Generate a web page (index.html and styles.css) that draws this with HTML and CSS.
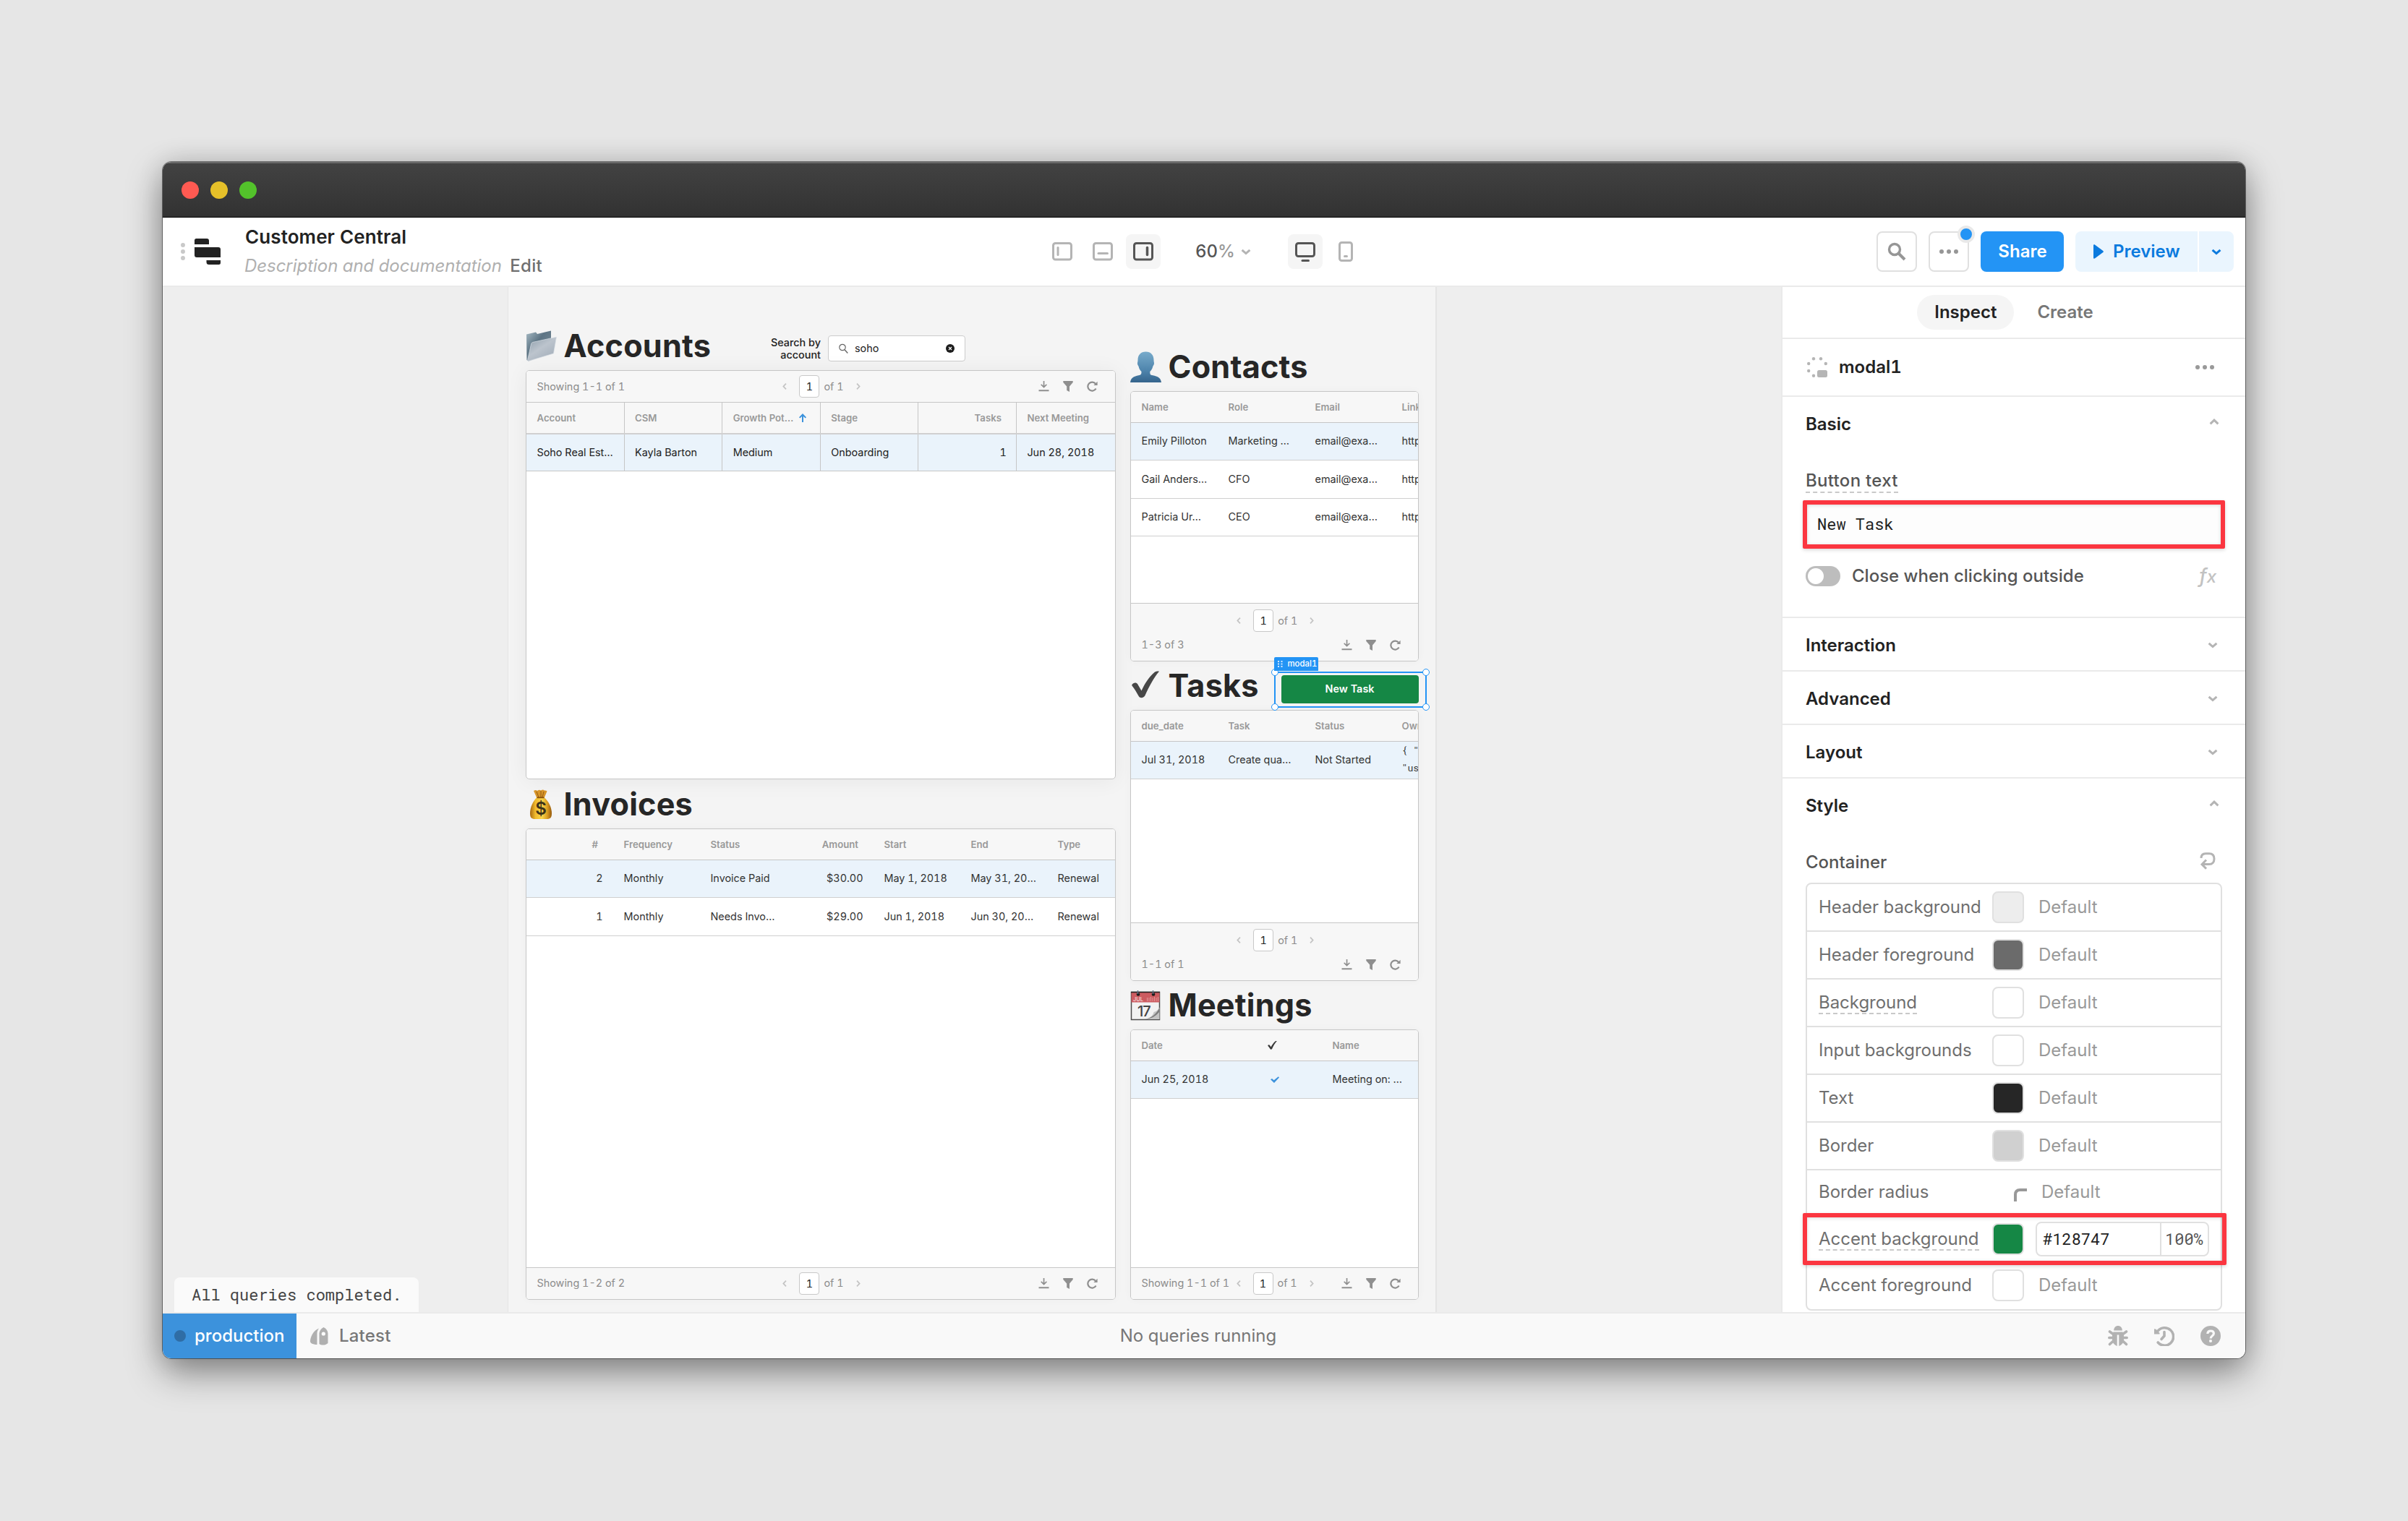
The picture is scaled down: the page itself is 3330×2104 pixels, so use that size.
FILE: index.html
```
<!DOCTYPE html>
<html lang="en">
<head>
<meta charset="utf-8">
<title>Customer Central</title>
<link rel="stylesheet" href="styles.css">
</head>
<body>
<svg class="defs" aria-hidden="true">
  <symbol id="chev-down" viewBox="0 0 14 9"><path d="M1.6 1.8 7 6.6l5.4-4.8" fill="none" stroke="currentColor" stroke-width="3"/></symbol>
  <symbol id="chev-up" viewBox="0 0 14 9"><path d="M1.6 7.4 7 2.2l5.4 5.2" fill="none" stroke="currentColor" stroke-width="3"/></symbol>
  <symbol id="prev" viewBox="0 0 6 9"><path d="M5 .7 1.4 4.5 5 8.3" fill="none" stroke="currentColor" stroke-width="1.8"/></symbol>
  <symbol id="next" viewBox="0 0 6 9"><path d="M1 .7 4.6 4.5 1 8.3" fill="none" stroke="currentColor" stroke-width="1.8"/></symbol>
  <symbol id="download" viewBox="0 0 15 15"><path d="M.5 12.2h14v2.1H.5zM6.7 0h1.7v6.600l2.600-2.300.9 1.300-4.350 4.200L3.200 5.600l.9-1.300 2.600 2.300z" fill="currentColor"/></symbol>
  <symbol id="filter" viewBox="0 0 14 15"><path d="M.3 0h13.400v1.900L9 7.400V15l-3.800-2V7.400L.3 1.900z" fill="currentColor"/></symbol>
  <symbol id="refresh" viewBox="0 0 15 15"><path d="M12.600 10.500A6 6 0 1 1 12 3.800" fill="none" stroke="currentColor" stroke-width="2.200"/><path d="M14.600.800V6H9.400z" fill="currentColor"/></symbol>
  <symbol id="dots" viewBox="0 0 26 6"><circle cx="3" cy="3" r="3"/><circle cx="13" cy="3" r="3"/><circle cx="23" cy="3" r="3"/></symbol>
</svg>

<div class="window">
  <div class="titlebar"><i class="light red"></i><i class="light yellow"></i><i class="light green"></i></div>

  <header class="topbar">
    <div class="brand">
      <svg class="grip" viewBox="0 0 6 24"><circle cx="3" cy="3" r="3"/><circle cx="3" cy="12" r="3"/><circle cx="3" cy="21" r="3"/></svg>
      <svg class="logo" viewBox="0 0 36 36"><path d="M2.500 0H17a3 3 0 0 1 3 3v5H0V2.500A2.500 2.500 0 0 1 2.500 0zM0 12h33a3 3 0 0 1 3 3v11H3a3 3 0 0 1-3-3zM16.500 30H36v3.500a2.500 2.500 0 0 1-2.500 2.500H20a3.500 3.500 0 0 1-3.500-3.500z"/></svg>
      <div class="names">
        <div class="app-name">Customer Central</div>
        <div class="desc"><em>Description and documentation</em> <span>Edit</span></div>
      </div>
    </div>
    <div class="view-tools">
      <span class="tool"><svg width="28" height="26" viewBox="0 0 28 26"><rect x="1.500" y="1.500" width="25" height="22.500" rx="3"/><path d="M8 7.500v10"/></svg></span>
      <span class="tool"><svg width="28" height="26" viewBox="0 0 28 26"><rect x="1.500" y="1.500" width="25" height="22.500" rx="3"/><path d="M8 15.500h12.500"/></svg></span>
      <span class="tool on"><svg width="28" height="26" viewBox="0 0 28 26"><rect x="1.500" y="1.500" width="25" height="22.500" rx="3"/><path d="M19.500 7.500v10" stroke-width="3.500"/></svg></span>
      <span class="zoom">60<b>%</b><svg class="chev" width="14" height="9"><use href="#chev-down"/></svg></span>
      <span class="tool on"><svg width="28" height="28" viewBox="0 0 28 28"><rect x="1.500" y="2.500" width="25" height="18" rx="3"/><path d="M10 26.500h8.500"/></svg></span>
      <span class="tool"><svg width="20" height="28" viewBox="0 0 20 28"><rect x="1.500" y="1.500" width="17" height="25" rx="3"/><path d="M8.500 20.500h3"/></svg></span>
    </div>
    <div class="actions">
      <span class="icon-btn"><svg width="26" height="26" viewBox="0 0 26 26"><circle cx="10" cy="10" r="7.500" fill="none" stroke="currentColor" stroke-width="3.400"/><path d="m15.500 15.500 8.500 8.500" stroke="currentColor" stroke-width="4"/></svg></span>
      <span class="icon-btn"><svg width="26" height="6"><use href="#dots"/></svg><i class="badge"></i></span>
      <span class="share">Share</span>
      <span class="preview"><span class="preview-main"><svg width="14" height="20" viewBox="0 0 14 20"><path d="M0 1.500C0 .2 1.200-.2 2.200.7L13 8.700a1.600 1.600 0 0 1 0 2.600L2.200 19.300C1.200 20.200 0 19.800 0 18.500z"/></svg>Preview</span><span class="preview-more"><svg width="14" height="9"><use href="#chev-down"/></svg></span></span>
    </div>
  </header>

  <main class="workspace">
    <div class="stage">
      <div class="canvas">
        <section class="col">
          <div class="heading first-left">
            <svg class="emoji" viewBox="0 0 43 43"><defs><linearGradient id="fb" x1="0" y1="0" x2="1" y2="1"><stop offset="0" stop-color="#a9bcc6"/><stop offset=".4" stop-color="#5d7484"/><stop offset="1" stop-color="#7e919d"/></linearGradient><linearGradient id="ff" x1="0" y1="0" x2=".8" y2="1"><stop offset="0" stop-color="#8b9ba9"/><stop offset=".5" stop-color="#bcc4cd"/><stop offset="1" stop-color="#a2adb9"/></linearGradient></defs><path d="M1 5.500 14 2.500l2 2.500 19-4.500v31L4 42.500 1.500 41z" fill="url(#fb)"/><path d="M9.500 16.500 42.500 9.200 38.500 32 3.500 42.500q-1-.5-.8-2L7.500 19q.5-2 2-2.500z" fill="url(#ff)" stroke="#dde3e8" stroke-width=".7"/></svg>
            <h2>Accounts</h2>
            <div class="search">
              <label>Search by<br>account</label>
              <div class="search-box"><svg width="13" height="15" viewBox="0 0 13 15"><circle cx="5" cy="5.500" r="4.200" fill="none" stroke="#666" stroke-width="1.200"/><path d="m8 8.800 4.300 4.700" stroke="#666" stroke-width="1.400"/></svg><span>soho</span><svg width="12" height="12" viewBox="0 0 12 12"><circle cx="6" cy="6" r="6" fill="#1d1d1d"/><path d="m4 4 4 4M8 4 4 8" stroke="#fff" stroke-width="1.200"/></svg></div>
            </div>
          </div>
          <div class="table accounts">
            <div class="bar top"><span>Showing 1-1 of 1</span><span class="pager"><svg width="6" height="9"><use href="#prev"/></svg><b>1</b>of 1<svg width="6" height="9"><use href="#next"/></svg></span><span class="tools"><svg width="15" height="15"><use href="#download"/></svg><svg width="14" height="15"><use href="#filter"/></svg><svg width="15" height="15"><use href="#refresh"/></svg></span></div>
            <div class="row head"><span>Account</span><span>CSM</span><span>Growth Pot… <svg class="sort" width="10" height="12" viewBox="0 0 10 12"><path d="M5 0 10 5.300 8.700 6.600 6 4v8H4V4L1.300 6.600 0 5.300z" fill="#3c92dc"/></svg></span><span>Stage</span><span class="num">Tasks</span><span>Next Meeting</span></div>
            <div class="row sel"><span>Soho Real Est…</span><span>Kayla Barton</span><span>Medium</span><span>Onboarding</span><span class="num">1</span><span>Jun 28, 2018</span></div>
          </div>
          <div class="heading">
            <svg class="emoji" viewBox="0 0 43 43"><defs><linearGradient id="bag" x1="0" x2="1"><stop offset="0" stop-color="#a9690f"/><stop offset=".25" stop-color="#f0bb2d"/><stop offset=".55" stop-color="#fbd64c"/><stop offset=".8" stop-color="#d99a20"/><stop offset="1" stop-color="#95590c"/></linearGradient></defs><path d="M11 3q3-2 5 0 2.500-2.200 5-.6Q24 .500 26 2.600q2-.6 3.500.8L25.500 13h-10z" fill="#d8962a"/><path d="m15 4 3 8m3-9v9m4-8-2 8" stroke="#8d5510" stroke-width=".9"/><path d="M15.500 12h10c6 5 10.500 14 10.500 22 0 6-2 8-7 8H13c-5 0-7-2-7-8 0-8 4-17 9.500-22z" fill="url(#bag)"/><path d="M15.500 12.300h10" stroke="#8a520e" stroke-width="1.800"/><text x="21" y="36" text-anchor="middle" class="dollar">$</text></svg>
            <h2>Invoices</h2>
          </div>
          <div class="table invoices">
            <div class="row head"><span class="num">#</span><span>Frequency</span><span>Status</span><span class="num">Amount</span><span>Start</span><span>End</span><span>Type</span></div>
            <div class="row sel"><span class="num">2</span><span>Monthly</span><span>Invoice Paid</span><span class="num">$30.00</span><span>May 1, 2018</span><span>May 31, 20…</span><span>Renewal</span></div>
            <div class="row"><span class="num">1</span><span>Monthly</span><span>Needs Invo…</span><span class="num">$29.00</span><span>Jun 1, 2018</span><span>Jun 30, 20…</span><span>Renewal</span></div>
            <div class="bar bottom"><span>Showing 1-2 of 2</span><span class="pager"><svg width="6" height="9"><use href="#prev"/></svg><b>1</b>of 1<svg width="6" height="9"><use href="#next"/></svg></span><span class="tools"><svg width="15" height="15"><use href="#download"/></svg><svg width="14" height="15"><use href="#filter"/></svg><svg width="15" height="15"><use href="#refresh"/></svg></span></div>
          </div>
        </section>

        <section class="col right">
          <div class="heading first-right">
            <svg class="emoji" viewBox="0 0 43 43"><defs><linearGradient id="pp" x1="0" y1="0" x2="0" y2="1"><stop offset="0" stop-color="#78abcb"/><stop offset=".6" stop-color="#4f85ad"/><stop offset="1" stop-color="#35648c"/></linearGradient></defs><path d="M21.500.5c7 0 11 4.500 11 11.500 0 3 .8 3.500.4 5.500-.4 2-1.400 2.200-1.800 4-.6 2.800-2 4.700-3.800 6.500 0 3 .2 4 1.700 4.800 6 1.700 13 1.700 14 10.200H0c1-8.500 8-8.500 13.500-10.200 1.700-.8 2-2 2-4.800-1.900-1.800-3.200-3.700-3.700-6.500-.4-1.800-1.500-2-1.800-4-.3-2 .5-2.500.5-5.500 0-7 4-11.500 11-11.500z" fill="url(#pp)"/></svg>
            <h2>Contacts</h2>
          </div>
          <div class="table contacts">
            <div class="row head"><span>Name</span><span>Role</span><span>Email</span><span>LinkedIn</span></div>
            <div class="row sel"><span>Emily Pilloton</span><span>Marketing …</span><span>email@exa…</span><span>https://</span></div>
            <div class="row"><span>Gail Anders…</span><span>CFO</span><span>email@exa…</span><span>https://</span></div>
            <div class="row"><span>Patricia Ur…</span><span>CEO</span><span>email@exa…</span><span>https://</span></div>
            <div class="bar double"><span class="pager"><svg width="6" height="9"><use href="#prev"/></svg><b>1</b>of 1<svg width="6" height="9"><use href="#next"/></svg></span><span class="count">1-3 of 3</span><span class="tools"><svg width="15" height="15"><use href="#download"/></svg><svg width="14" height="15"><use href="#filter"/></svg><svg width="15" height="15"><use href="#refresh"/></svg></span></div>
          </div>
          <div class="heading">
            <svg class="emoji" viewBox="0 0 43 43"><path d="M2.500 20c1.500-3 6-3.500 7.500-1l5.500 9.500C20 19 26 9 33.500 3c1.500-1.200 4-1.800 6.500-1.300C32 11 26 23 20.500 35c-1.300 3.200-6.500 4.500-8.500 1.500-3-5-5.500-10-9.200-14.500-.6-.8-.6-1.400-.3-2z" fill="#474747"/></svg>
            <h2>Tasks</h2>
            <div class="modal-widget">
              <span class="green-btn">New Task</span>
              <div class="selection"><i class="h tl"></i><i class="h tr"></i><i class="h bl"></i><i class="h br"></i><span class="tag"><svg width="7" height="9" viewBox="0 0 7 9"><path d="M0 0h2v2H0zM4.500 0h2v2h-2zM0 3.500h2v2H0zM4.500 3.500h2v2h-2zM0 7h2v2H0zM4.500 7h2v2h-2z" fill="#cfe6fd"/></svg>modal1</span></div>
            </div>
          </div>
          <div class="table contacts tasks">
            <div class="row head"><span>due_date</span><span>Task</span><span>Status</span><span>Owner</span></div>
            <div class="row sel"><span>Jul 31, 2018</span><span>Create qua…</span><span>Not Started</span><span class="json">{ "<br>"user</span></div>
            <div class="bar double"><span class="pager"><svg width="6" height="9"><use href="#prev"/></svg><b>1</b>of 1<svg width="6" height="9"><use href="#next"/></svg></span><span class="count">1-1 of 1</span><span class="tools"><svg width="15" height="15"><use href="#download"/></svg><svg width="14" height="15"><use href="#filter"/></svg><svg width="15" height="15"><use href="#refresh"/></svg></span></div>
          </div>
          <div class="heading">
            <svg class="emoji" viewBox="0 0 43 43"><rect x="1.500" y="3.500" width="39" height="38" fill="#f2f2f2" stroke="#4b4b4b" stroke-width="1.500"/><path d="M1.500 3.500h39v14h-39z" fill="#cc5b60"/><path d="M1 3.500h40" stroke="#222" stroke-width="1.500"/><circle cx="11" cy="6.500" r="2.300" fill="#1c1c1c"/><circle cx="32" cy="6.500" r="2.300" fill="#1c1c1c"/><path d="M10.500 1v5M31.500 1v5" stroke="#5c7488" stroke-width="1.500"/><text x="4" y="16" class="cal-month">JUL</text><path d="M23.500 11v5m2.500-5v5m2.500-6v6m2.500-5v5m2.500-6v6m2.500-5v5m2.500-6v6" stroke="#e3979a" stroke-width="1"/><path d="M21 41c7-2 11-6 11.500-10 3-.5 6-3 8-6.500V41z" fill="#c4c4c4"/><path d="M21 41c8-2 15-7 19.500-16l-.5 6c-5 6-11 9-19 10z" fill="#7d7d7d"/><text x="10" y="37" class="cal-day">17</text></svg>
            <h2>Meetings</h2>
          </div>
          <div class="table meetings">
            <div class="row head"><span>Date</span><span><svg width="13" height="12" viewBox="0 0 13 12"><path d="M.3 6c.6-1 2-1.100 2.500-.3L4.600 8.300C6.200 5.200 8.200 2.200 10.500.4c.6-.4 1.500-.5 2.300-.3C10 3.200 8 7 6.200 10.700c-.5 1-2.100 1.400-2.700.4C2.600 9.500 1.500 8 .4 6.700z" fill="#3a3a3a"/></svg></span><span>Name</span></div>
            <div class="row sel"><span>Jun 25, 2018</span><span class="mid"><svg width="12" height="9" viewBox="0 0 12 9"><path d="M0 4.300 2 3l2.700 2.200L10.800.2 12 1.500 5 9z" fill="#3c92dc"/></svg></span><span>Meeting on: …</span></div>
            <div class="bar bottom"><span>Showing 1-1 of 1</span><span class="pager"><svg width="6" height="9"><use href="#prev"/></svg><b>1</b>of 1<svg width="6" height="9"><use href="#next"/></svg></span><span class="tools"><svg width="15" height="15"><use href="#download"/></svg><svg width="14" height="15"><use href="#filter"/></svg><svg width="15" height="15"><use href="#refresh"/></svg></span></div>
          </div>
        </section>
      </div>
      <div class="toast">All queries completed.</div>
    </div>

    <aside class="inspector">
      <nav class="tabs"><span class="tab active">Inspect</span><span class="tab">Create</span></nav>
      <div class="component">
        <svg width="28" height="28" viewBox="0 0 28 28"><g fill="#b5b5b5"><circle cx="9" cy="2.200" r="2.200"/><circle cx="19" cy="2.200" r="2.200"/><circle cx="2.200" cy="9" r="2.200"/><circle cx="25.800" cy="9" r="2.200"/><circle cx="2.200" cy="19" r="2.200"/><circle cx="9" cy="25.800" r="2.200"/><rect x="14" y="18" width="14" height="10" rx="2.500"/></g></svg>
        <span>modal1</span><svg class="more" width="26" height="6"><use href="#dots"/></svg>
      </div>
      <section class="basic">
        <div class="section-head open"><span>Basic</span><svg width="14" height="9"><use href="#chev-up"/></svg></div>
        <div class="field-label"><span class="dashed">Button text</span></div>
        <div class="input highlight">New Task</div>
        <div class="switch-row"><i class="switch"></i><span>Close when clicking outside</span><span class="fx">f<small>x</small></span></div>
      </section>
      <div class="section-head"><span>Interaction</span><svg width="14" height="9"><use href="#chev-down"/></svg></div>
      <div class="section-head"><span>Advanced</span><svg width="14" height="9"><use href="#chev-down"/></svg></div>
      <div class="section-head"><span>Layout</span><svg width="14" height="9"><use href="#chev-down"/></svg></div>
      <div class="section-head open"><span>Style</span><svg width="14" height="9"><use href="#chev-up"/></svg></div>
      <div class="style-title"><span>Container</span><svg width="22" height="24" viewBox="0 0 22 24"><path d="M2 8c0-4 2.500-6.300 6.500-6.300H13c4.500 0 7 2.800 7 7.300s-2.500 7.500-7 7.500H4" fill="none" stroke="currentColor" stroke-width="3"/><path d="M9 10.500 3 16.700l6 6" fill="none" stroke="currentColor" stroke-width="3"/></svg></div>
      <div class="style-list">
        <div class="style-row"><span class="name">Header background</span><i class="swatch c-head"></i><span>Default</span></div>
        <div class="style-row"><span class="name">Header foreground</span><i class="swatch c-fore"></i><span>Default</span></div>
        <div class="style-row"><span class="name"><u class="dashed">Background</u></span><i class="swatch"></i><span>Default</span></div>
        <div class="style-row"><span class="name">Input backgrounds</span><i class="swatch"></i><span>Default</span></div>
        <div class="style-row"><span class="name">Text</span><i class="swatch c-text"></i><span>Default</span></div>
        <div class="style-row"><span class="name">Border</span><i class="swatch c-border"></i><span>Default</span></div>
        <div class="style-row radius"><span class="name">Border radius</span><svg class="corner" width="18" height="18" viewBox="0 0 18 18"><path d="M2 18V8.500C2 4.500 4 2 8.500 2H18" fill="none" stroke="#999" stroke-width="4"/></svg><span>Default</span></div>
        <div class="style-row accent"><span class="name"><u class="dashed">Accent background</u></span><i class="swatch c-accent"></i><span class="hex"><span>#128747</span><span>100%</span></span></div>
        <div class="style-row"><span class="name">Accent foreground</span><i class="swatch"></i><span>Default</span></div>
      </div>
    </aside>
  </main>

  <footer class="statusbar">
    <div class="status-left">
      <span class="env"><i></i>production</span>
      <svg width="25" height="25" viewBox="0 0 25 25"><path d="M12.500 8c.6-3.200 2.800-6.500 6-8 3.500 1.600 5.800 4.800 6 8.500V22c-3 3-9 3.500-12 1z" fill="#b0b0b0"/><path d="M12 1.500C10 4 9.500 6.500 9.500 9v15C5 24 0 22.500 0 19.500 0 14 4 4.500 12 1.500z" fill="#b0b0b0"/><circle cx="18.300" cy="9" r="2.600" fill="#fff"/></svg>
      <span>Latest</span>
    </div>
    <span class="status-mid">No queries running</span>
    <div class="status-right">
      <svg width="28" height="28" viewBox="0 0 28 28"><path d="M8.200 6.500C8.200 2.500 10.500 0 14 0S19.800 2.500 19.800 6.500z" fill="#b2b2b2"/><path d="M7.500 8.500h13l1.500 4v9c-2 4-5 6.500-8 6.500S8 25.500 6 21.500v-9z" fill="#b2b2b2"/><path d="M8 12 2.500 8M8 16.500H1.800M8 20.500l-5.500 5M20 12l5.500-4M20 16.500h6.200M20 20.500l5.500 5" stroke="#b2b2b2" stroke-width="3.600" stroke-linecap="round"/><path d="M14 12.500V28" stroke="#f9f9f9" stroke-width="2.600"/></svg>
      <svg width="28" height="28" viewBox="0 0 28 28"><path d="M5 7.200A12.200 12.200 0 1 1 5.200 23" fill="none" stroke="#b2b2b2" stroke-width="3.600" stroke-linecap="round"/><path d="M0 4.200l2.500.5L7.500 10v1.500H0z" fill="#b2b2b2"/><path d="M14 8.500V14l-4 4.500" fill="none" stroke="#b2b2b2" stroke-width="3.600" stroke-linecap="round"/></svg>
      <svg width="28" height="28" viewBox="0 0 28 28"><circle cx="14" cy="14" r="14" fill="#b2b2b2"/><path d="M9.800 11c.2-2.600 1.900-4 4.300-4 2.500 0 4.300 1.400 4.300 3.600 0 3.200-4.300 3.400-4.300 6.900" fill="none" stroke="#f9f9f9" stroke-width="3.200"/><circle cx="14" cy="21" r="2.100" fill="#f9f9f9"/></svg>
    </div>
  </footer>
</div>
</body>
</html>
```
FILE: styles.css
```
* { box-sizing: border-box; }
body {
  margin: 0;
  width: 3330px;
  height: 2104px;
  padding: 224px 225px 0;
  background: #e6e6e6;
  overflow: hidden;
  font: 400 24px/30px Inter, "Liberation Sans", sans-serif;
  font-feature-settings: "tnum";
  color: #222;
}
svg { display: block; flex: none; }
i { font-style: normal; }
.defs { position: absolute; width: 0; height: 0; }

.window {
  display: grid;
  grid-template-rows: 77px 96px 1fr 64px;
  width: 2880px;
  height: 1655px;
  border-radius: 12px;
  overflow: hidden;
  background: #fff;
  box-shadow: 0 0 0 1px rgba(0, 0, 0, .45), 0 20px 50px rgba(0, 0, 0, .42), 0 0 36px rgba(0, 0, 0, .12);
}
.titlebar {
  display: flex;
  align-items: center;
  gap: 16px;
  padding: 0 0 0 26px;
  background: linear-gradient(#424242, #323232);
  border-top: 2px solid #6a6a6a;
  border-bottom: 1px solid #000;
}
.light { width: 24px; height: 24px; border-radius: 50%; }
.red { background: #ff5a52; }
.yellow { background: #e6c029; }
.green { background: #53c22b; }

/* top bar */
.topbar {
  display: grid;
  grid-template-columns: 1fr auto 1fr;
  align-items: center;
  border-bottom: 2px solid #eaeaea;
}
.brand { display: flex; align-items: center; padding-left: 25px; }
.grip { width: 6px; height: 24px; fill: #c9c9c9; }
.logo { width: 36px; height: 36px; margin-left: 13px; fill: #222; }
.names { margin-left: 33px; }
.app-name { padding-left: 1px; font-size: 26px; font-weight: 600; line-height: 40px; letter-spacing: .1px; }
.desc { line-height: 40px; color: #b0b0b0; white-space: pre; }
.desc em { letter-spacing: -.04px; }
.desc span { margin-left: 5px; font-weight: 500; letter-spacing: .3px; color: #6f6f6f; }
.view-tools { display: flex; align-items: center; gap: 8px; }
.tool { display: flex; align-items: center; justify-content: center; width: 48px; height: 48px; border-radius: 8px; }
.tool svg { fill: none; stroke: #b4b4b4; stroke-width: 3; stroke-linecap: round; }
.tool.on { background: #f5f5f5; }
.tool.on svg { stroke: #555; }
.zoom { display: flex; align-items: center; width: 160px; padding-left: 40px; font-weight: 500; color: #555; }
.zoom b { font-weight: 500; color: #999; }
.chev { margin-left: 8px; color: #b4b4b4; }
.actions { display: flex; justify-content: flex-end; gap: 16px; padding-right: 16px; font-weight: 600; }
.icon-btn { position: relative; display: flex; align-items: center; justify-content: center; width: 56px; height: 56px; border: 2px solid #e0e0e0; border-radius: 8px; color: #969696; fill: #969696; }
.badge { position: absolute; top: -10px; right: -10px; width: 24px; height: 24px; border: 4px solid #e9e9e9; border-radius: 50%; background: #2394f5; }
.share { display: flex; align-items: center; justify-content: center; width: 115px; height: 56px; padding-left: 1px; border-radius: 8px; background: #2394f5; color: #fff; }
.preview { display: flex; gap: 2px; color: #0b7ade; fill: #0b7ade; }
.preview-main { display: flex; align-items: center; gap: 13px; width: 169px; height: 56px; padding-left: 25px; background: #eaf5fe; border-radius: 8px 0 0 8px; }
.preview-more { display: flex; align-items: center; justify-content: center; width: 48px; background: #eaf5fe; border-radius: 0 8px 8px 0; }

/* canvas */
.workspace { display: grid; grid-template-columns: 1fr 642px; min-height: 0; }
.stage { position: relative; padding-left: 477px; background: #eee; }
.canvas {
  display: grid;
  grid-template-columns: 815.5px 399px;
  column-gap: 20.5px;
  width: 1285px;
  height: 1418px;
  padding: 0 0 17px 24px;
  background: #f4f4f4;
  border: solid #e4e4e4;
  border-width: 0 2px 0 1px;
}
.toast { position: absolute; left: 16px; bottom: 0; width: 338px; height: 48px; padding-left: 24px; background: #fafafa; border-radius: 8px 8px 0 0; font: 22px/48px "Roboto Mono", monospace; color: #444; }
.col { display: flex; flex-direction: column; min-width: 0; }
.heading { display: flex; align-items: flex-end; flex: none; height: 68px; padding-bottom: 12px; }
.right .heading { height: 67px; }
.heading.first-left { height: 115px; }
.heading.first-right { height: 144px; }
.emoji { width: 43px; height: 43px; margin-right: 9.500px; }
h2 { margin: 0; font-size: 43.2px; font-weight: 700; line-height: 44px; letter-spacing: .2px; color: #262626; }
.dollar { font: 600 24px Inter, sans-serif; fill: #3c3218; }
.cal-month { font: 500 7.500px Inter, sans-serif; fill: #f5dada; }
.cal-day { font: 500 20px Inter, sans-serif; fill: #444; letter-spacing: -1px; }
.search { display: flex; align-items: center; gap: 10px; margin: 0 207.500px 0 auto; font-size: 14.4px; }
.search label { font-weight: 500; line-height: 17px; text-align: right; }
.search-box { display: flex; align-items: center; width: 190px; height: 36px; padding: 0 14px; background: #fff; border: 1px solid #ccc; border-radius: 4px; }
.search-box span { flex: 1; padding-left: 9px; }

.table { display: flex; flex-direction: column; flex: none; overflow: hidden; background: #fff; border: 1px solid #c6c6c6; border-radius: 5px; font-size: 14.4px; line-height: 20px; color: #333; box-shadow: 0 0 12px rgba(0, 0, 0, .03); }
.accounts { height: 566px; color: #222; box-shadow: 0 2px 30px rgba(0, 0, 0, .06); }
.invoices { height: 652px; }
.contacts { height: 374px; }
.tasks { height: 375px; }
.meetings { height: 374px; }
.row { display: grid; grid-auto-columns: 120px; grid-auto-flow: column; flex: none; height: 52.400px; border-bottom: 1px solid #cfcfcf; white-space: nowrap; }
.row > span { display: flex; align-items: center; padding: 0 14.500px 1px; }
.row .num { justify-content: flex-end; }
.head { height: 43px; background: #f7f7f7; border-bottom: 1px solid #c6c6c6; font-size: 13.2px; font-weight: 600; color: #999; }
.head > span { padding-bottom: .5px; }
.head .num { padding-right: 21px; }
.sel { background: #eaf3fb; }
.accounts .row { grid-template-columns: repeat(6, 1fr); height: 51px; }
.accounts .head { height: 44px; border-bottom: 2px solid #d0d0d0; }
.accounts .row > span { border-right: 1px solid #c6c6c6; padding-right: 13px; }
.accounts .head .num { padding-right: 20px; }
.accounts .row > span:last-child { border-right: 0; }
.accounts .sel { border-color: #c6c6c6; }
.sort { margin-left: 8px; }
.meetings .row { grid-template-columns: 174px 90px 1fr; }
.row .mid { justify-content: center; padding: 0; margin-right: 40px; }
.row .json { display: block; padding-top: 0; font: 13.2px/24px "Roboto Mono", monospace; }

.bar { display: grid; grid-template-columns: 1fr auto 1fr; align-items: center; flex: none; height: 44.500px; padding: 0 24px 0 14.500px; background: #f7f7f7; color: #8c8c8c; white-space: nowrap; }
.bar > * { min-width: 0; }
.bar.top { height: 44px; border-bottom: 1px solid #c6c6c6; }
.bar.bottom { margin-top: auto; border-top: 1px solid #c6c6c6; }
.bar .pager { margin-left: 12px; }
.meetings .bar { grid-template-columns: 119px auto 1fr; }
.pager { display: flex; align-items: center; color: #8c8c8c; }
.pager svg { color: #c4c4c4; }
.pager svg:first-child { margin-right: 17px; }
.pager svg:last-child { margin-left: 17px; }
.pager b { width: 28px; height: 31px; margin-right: 6px; border: 1px solid #c8c8c8; border-radius: 4px; background: #fff; font-weight: 400; line-height: 29px; text-align: center; color: #222; }
.tools { display: flex; justify-content: flex-end; gap: 19px; color: #8f8f8f; }
.bar.double { grid-template-columns: 1fr 1fr; grid-template-rows: 47px 20px; align-content: start; height: 80px; margin-top: auto; border-top: 1px solid #c6c6c6; padding-top: 0; }
.double .pager { grid-column: 1 / 3; justify-self: center; }
.double .count, .double .tools { align-self: center; }

.modal-widget { position: relative; width: 190px; height: 39px; margin: 0 0 -2.500px auto; }
.green-btn { display: flex; align-items: center; justify-content: center; height: 39px; padding: 0 1px 1px 0; border-radius: 4px; background: #158745; color: #fff; font-size: 14.4px; font-weight: 600; }
.selection { position: absolute; inset: -5px -10.500px -6px -10.500px; border: 2px solid #2394f5; }
.h { position: absolute; width: 10px; height: 10px; border: 1.500px solid #2394f5; border-radius: 50%; background: #fff; }
.tl { left: -6px; top: -6px; }
.tr { right: -6px; top: -6px; }
.bl { left: -6px; bottom: -6px; }
.br { right: -6px; bottom: -6px; }
.tag { position: absolute; left: -2px; bottom: calc(100% + 3px); display: flex; align-items: center; gap: 7px; width: 61px; height: 19px; padding-left: 5px; background: #2394f5; border-radius: 2px 2px 0 0; color: #fff; font-size: 11.4px; font-weight: 500; line-height: 19px; }

/* inspector */
.inspector { display: flex; flex-direction: column; min-height: 0; overflow: hidden; border-left: 2px solid #eaeaea; background: #fff; }
.tabs { display: flex; align-items: center; justify-content: center; gap: 8px; flex: none; height: 72px; border-bottom: 2px solid #eaeaea; font-weight: 600; }
.tab { height: 48px; padding: 0 24px; border-radius: 24px; line-height: 48px; color: #777; }
.active { background: #f5f5f5; color: #222; }
.component { display: flex; align-items: center; flex: none; height: 80px; padding: 0 43px 0 34px; border-bottom: 2px solid #eaeaea; font-weight: 600; fill: #999; }
.component span { margin-left: 16px; }
.more { margin-left: auto; }
.section-head { display: flex; align-items: center; justify-content: space-between; flex: none; height: 74px; padding: 3px 38px 0 32px; border-bottom: 2px solid #eaeaea; font-weight: 600; color: #222; }
.section-head svg { color: #b4b4b4; }
.section-head.open { border-bottom: 0; padding-top: 2px; padding-right: 36px; }
.section-head.open svg { margin-top: -7px; }
.basic { flex: none; height: 306px; border-bottom: 2px solid #eaeaea; }
.field-label { height: 34px; margin: 25px 32px 0; line-height: 34px; font-weight: 500; letter-spacing: .3px; color: #555; }
.dashed { display: inline-block; text-decoration: none; line-height: 30px; border-bottom: 2px dashed #c9c9c9; }
.highlight { height: 67px; margin: 10px 28px 0; border: 6px solid #fb3640; border-radius: 2px; box-shadow: 0 2px 5px rgba(0, 0, 0, .15), inset 0 1px 5px rgba(0, 0, 0, .15); }
.input { padding-left: 14px; background: #fdfdfd; font: 22px/54px "Roboto Mono", monospace; }
.switch-row { display: flex; align-items: center; margin: 23px 40px 0 32px; height: 30px; font-weight: 500; color: #555; }
.switch { width: 48px; height: 28px; border-radius: 14px; background: radial-gradient(circle at 14px 14px, #fff 10.500px, #bdbdbd 11.500px); margin-right: 16px; }
.fx { margin-left: auto; font-size: 27px; font-style: italic; font-weight: 500; color: #c2c2c2; }
.fx small { font-size: 24px; }
.style-title { display: flex; align-items: center; justify-content: space-between; flex: none; height: 40px; margin: 22px 41px 0 32px; font-weight: 500; color: #555; }
.style-title svg { color: #b4b4b4; margin-top: -4px; }
.style-list { flex: none; margin: 8px 32px 0; border: 2px solid #e0e0e0; border-radius: 8px; }
.style-row { display: flex; align-items: center; height: 66px; padding-left: 16px; border-bottom: 2px solid #e0e0e0; color: #999; }
.style-row:last-child { border-bottom: 0; }
.name { width: 240px; color: #6f6f6f; letter-spacing: -.03px; }
.name .dashed { line-height: 28px; margin-top: 2px; }
.swatch { width: 44px; height: 44px; margin-right: 20px; border: 2px solid #e0e0e0; border-radius: 8px; background: #fff; }
.c-head { background: #ededed; }
.c-fore { background: #6b6b6b; }
.c-text { background: #262626; }
.c-border { background: #d0d0d0; }
.c-accent { background: #158745; }
.style-row.radius { height: 60px; border-bottom: 0; }
.corner { margin: 8px 20px 0 30px; }
.accent { position: relative; height: 72px; margin: -1px -8px -5px -6px; padding: 0 0 1px 16px; border: 6px solid #fb3640; border-radius: 2px; box-shadow: 0 2px 5px rgba(0, 0, 0, .15), inset 0 1px 5px rgba(0, 0, 0, .15); }
.hex { display: flex; width: 240px; height: 48px; margin-left: -4px; border: 2px solid #e0e0e0; border-radius: 8px; font: 22px/44px "Roboto Mono", monospace; color: #555; }
.hex span { padding-left: 5px; }
.hex span:first-child { width: 172px; padding-left: 8px; border-right: 2px solid #e0e0e0; color: #222; }

/* status bar */
.statusbar { display: grid; grid-template-columns: 1fr auto 1fr; align-items: center; border-top: 2px solid #eaeaea; background: #f9f9f9; color: #777; }
.status-left { display: flex; align-items: center; height: 62px; font-weight: 500; letter-spacing: .2px; }
.status-left > svg { margin: 0 15px 0 19px; }
.env { display: flex; align-items: center; width: 185px; height: 62px; padding-left: 16px; background: #3c92dc; color: #fff; letter-spacing: 0; }
.env i { width: 16px; height: 16px; margin-right: 12px; border-radius: 50%; background: #2f6da5; }
.status-mid { margin-right: 16px; }
.status-right { display: flex; justify-content: flex-end; gap: 36px; padding-right: 34px; }
```
